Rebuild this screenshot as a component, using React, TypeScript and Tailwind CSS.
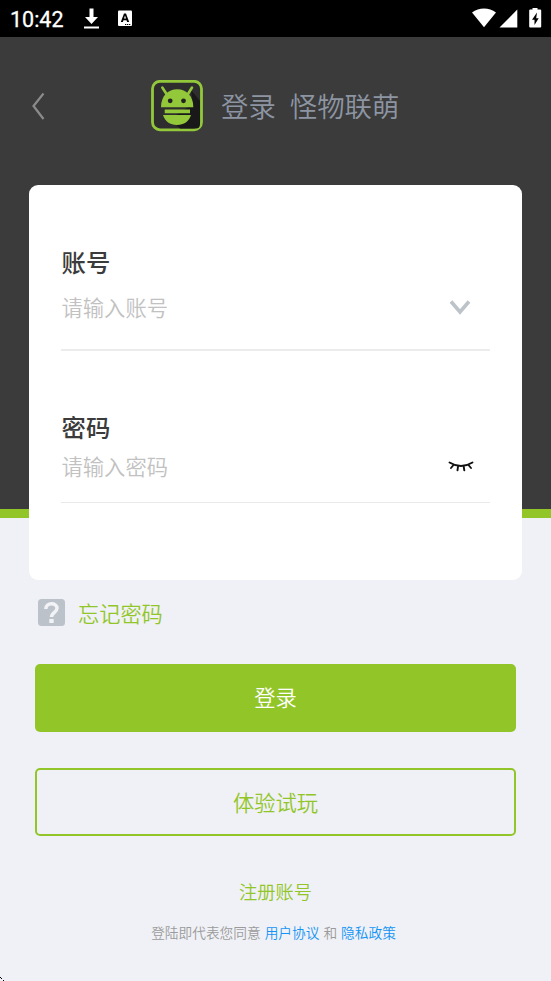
function StatusBar() {
  return (
    <div className="flex h-[37px] items-center bg-black pl-[10px] text-white">
      <span className="w-[74px] pt-[2px] font-[Roboto,sans-serif] text-[21.5px] leading-[35px] font-normal [-webkit-text-stroke:0.3px_#fff]">10:42</span>
      <svg className="h-[37px] w-[60px]" viewBox="84 0 60 37" fill="#fff">
        <path d="M89.500 8.500h4V17h4.500L91.500 24 85 17h4.500zM84 26.500h15v2H84z" />
        <rect x="118" y="10.500" width="14" height="15.500" rx="1" />
        <path d="M120.800 22l3.200-8.500h2l3.200 8.500h-2.100l-.6-1.800h-3l-.6 1.800zm3.200-3.400h2l-1-3z" fill="#000" />
        <path d="M125 24h1.300v1H125zm2 0h1.300v1H127zm2 0h1.300v1H129z" fill="#000" />
      </svg>
      <svg className="ml-auto h-[37px] w-[81px]" viewBox="470 0 81 37" fill="#fff">
        <path d="M472 12.500C479 7.300 489 7.300 496 12.500L484 27.200z" />
        <path d="M517.300 9.500V27.500H499.500z" />
        <path d="M532.500 8h5v1.500h2.700q1 0 1 1v16q0 1-1 1h-10q-1 0-1-1v-16q0-1 1-1h2.300z" />
        <path d="M537 12.500l-5 7.200h2.500v5.300l4.200-6.800h-2.500z" fill="#000" />
      </svg>
    </div>
  );
}

function AppLogo() {
  return (
    <svg className="ml-[105px] h-[52px] w-[52px]" viewBox="0 0 52 52">
      <rect x="1.500" y="1.300" width="49" height="48.500" rx="7.500" fill="#2e2e2e" stroke="#93c83b" strokeWidth="2.800" />
      <path d="M40 10L49 21V44Q49 48.500 45 48.500H29L19 39L42 24z" fill="#191919" />
      <path d="M11.300 7.500l4.200 6.500M41 7.500L37 14" stroke="#93c83b" strokeWidth="2.600" strokeLinecap="round" />
      <path d="M10 27.300C10 16 17 9.300 26.200 9.300S42.300 16 42.300 27.300z" fill="#93c83b" />
      <circle cx="19.200" cy="20.800" r="2.400" fill="#222" />
      <circle cx="32.500" cy="20.800" r="2.400" fill="#222" />
      <path d="M13.700 29.500H39v3.800H13.700zM12 35h28C38 41.500 33 45 26 45S14 41.500 12 35z" fill="#93c83b" />
    </svg>
  );
}

export default function App() {
  return (
    <div className="h-[981px] w-[551px] overflow-hidden bg-[#f0f1f6] font-['Noto_Sans_CJK_SC',sans-serif] font-[350]">
      <StatusBar />
      <header className="h-[481px] border-b-[9px] border-[#92c628] bg-[#3b3b3b] pt-[43px]">
        <div className="flex h-[52px] items-center pl-[31px]">
          <svg className="h-[30px] w-[15px]" viewBox="0 0 15 30" fill="none" stroke="#8b8b8b" strokeWidth="2.200">
            <path d="M12.500 2.500L2.500 15l10 13" />
          </svg>
          <AppLogo />
          <h1 className="ml-[18px] flex gap-[14px] pb-[2px] text-[27.4px] leading-[50px] font-[350] text-[#8d95a3]">
            <span>登录</span>
            <span>怪物联萌</span>
          </h1>
        </div>
      </header>

      <main className="-mt-[333px]">
        <form className="mx-[29px] h-[395px] rounded-[9px] bg-white px-8 pt-[59px]">
          <div className="h-[107px] border-b-2 border-[#ececed]">
            <label className="block h-9 pl-[0.5px] text-[24.4px] leading-9 font-medium text-[#3b3b3b]">账号</label>
            <div className="mt-[9px] flex h-9 items-center justify-between pr-[18px] pl-[0.5px] text-[21.3px] leading-9 text-[#c1c1c1]">
              <span>请输入账号</span>
              <svg className="h-[18px] w-6" viewBox="0 0 24 18" fill="none" stroke="#bcc3c9" strokeWidth="3.600">
                <path d="M3 3.500L12 14 21 3.500" />
              </svg>
            </div>
          </div>
          <div className="mt-[58px] h-[94px] border-b border-[#e9e9ea]">
            <label className="block h-9 pl-[0.5px] text-[24.4px] leading-9 font-medium text-[#3b3b3b]">密码</label>
            <div className="mt-[3px] flex h-9 items-center justify-between pr-[16px] pl-[0.5px] text-[21.3px] leading-9 text-[#c1c1c1]">
              <span>请输入密码</span>
              <svg className="h-3 w-[26px]" viewBox="0 0 26 12" fill="none" stroke="#111" strokeWidth="1.900" strokeLinecap="round">
                <path d="M1.500 2.500Q13 9.500 24.500 2.500M5.500 5L3 8M10 6.500L9.500 10.300M15.700 6.500l.6 3.800M20.500 5L23 8" />
              </svg>
            </div>
          </div>
        </form>

        <div className="mt-[14px] flex h-9 items-center pl-[38px]">
          <svg className="h-[27px] w-[27px]" viewBox="0 0 27 27">
            <rect width="27" height="27" rx="3.500" fill="#bcc2c9" />
            <path d="M7.800 10C7.800 3.200 19 3.200 19 9.300c0 4-5.500 4-5.500 8.700" fill="none" stroke="#f2f3f7" strokeWidth="3.500" />
            <rect x="11.300" y="20" width="4.400" height="4" rx=".5" fill="#f2f3f7" />
          </svg>
          <a className="ml-[13px] pt-[2px] text-[21.2px] leading-[34px] text-[#92c628]">忘记密码</a>
        </div>

        <div className="mx-[35px] mt-[34px] flex flex-col gap-9">
          <button className="h-[68px] rounded-[5px] bg-[#92c628] pb-[2px] text-[21.3px] text-white">登录</button>
          <button className="h-[68px] rounded-[5px] border-2 border-[#92c628] pb-px text-[21.3px] text-[#92c628]">体验试玩</button>
        </div>

        <a className="mt-10 block h-[30px] text-center text-[18.3px] leading-[30px] text-[#92c628]">注册账号</a>
        <p className="mt-4 flex justify-center pr-1 text-[13.7px] leading-5 text-[#9b9b9b]">
          <span>登陆即代表您同意</span>
          <a className="ml-1 text-[#1394f5]">用户协议</a>
          <span className="mx-1">和</span>
          <a className="text-[#1394f5]">隐私政策</a>
        </p>
        <svg className="mt-[35px] h-1 w-1" viewBox="0 0 4 4" fill="#000">
          <path d="M0 0h1v1H0zM1 1h1v1H1zM3 3h1v1H3z" />
        </svg>
      </main>
    </div>
  );
}
